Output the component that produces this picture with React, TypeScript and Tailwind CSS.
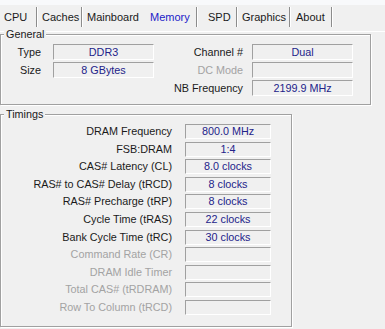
const tabs = [
  { label: 'CPU', w: 'w-[37px]', pl: 'pl-[4px]', sep: true },
  { label: 'Caches', w: 'w-[45px]', pl: 'pl-[5px]', sep: true },
  { label: 'Mainboard', w: 'w-[61px]', pl: 'pl-[5px]', sep: false },
  { label: 'Memory', w: 'w-[54px]', pl: 'pl-[7px]', sep: true, active: true },
  { label: 'SPD', w: 'w-[40px]', pl: 'pl-[11px]', sep: true },
  { label: 'Graphics', w: 'w-[53px]', pl: 'pl-[5px]', sep: true },
  { label: 'About', w: 'w-[42px]', pl: 'pl-[6px]', sep: true },
]

const timings = [
  { label: 'DRAM Frequency', value: '800.0 MHz' },
  { label: 'FSB:DRAM', value: '1:4' },
  { label: 'CAS# Latency (CL)', value: '8.0 clocks' },
  { label: 'RAS# to CAS# Delay (tRCD)', value: '8 clocks' },
  { label: 'RAS# Precharge (tRP)', value: '8 clocks' },
  { label: 'Cycle Time (tRAS)', value: '22 clocks' },
  { label: 'Bank Cycle Time (tRC)', value: '30 clocks' },
  { label: 'Command Rate (CR)', value: '' },
  { label: 'DRAM Idle Timer', value: '' },
  { label: 'Total CAS# (tRDRAM)', value: '' },
  { label: 'Row To Column (tRCD)', value: '' },
]

function Field({ value, w, h }: { value: string; w: string; h: string }) {
  return (
    <div
      className={`${w} ${h} flex items-center justify-center border border-t-[#a0a0a0] border-l-[#a0a0a0] border-r-white border-b-white text-[#23238a]`}
    >
      {value}
    </div>
  )
}

function Group({ title, className, children }: { title: string; className: string; children: React.ReactNode }) {
  return (
    <div className={`relative border border-[#a0a0a0] shadow-[inset_1px_1px_0_#fff,1px_1px_0_#fff] ${className}`}>
      <span className="absolute left-[3px] top-[-7px] px-[2px] bg-[#f0f0f0] leading-[12px] text-[#1a1a1a]">{title}</span>
      {children}
    </div>
  )
}

export default function App() {
  return (
    <div className="w-[385px] h-[329px] overflow-hidden bg-[#f0f0f0] text-[10.8px] leading-none font-['Liberation_Sans',Arial,sans-serif] text-[#1a1a1a]">
      {/* ── tab strip ── */}
      <div className="h-[5px] bg-[#f8f9fb]" />
      <div className="flex h-[26px] text-[11px]">
        {tabs.map(t => (
          <div
            key={t.label}
            className={`${t.w} ${t.pl} mt-[2px] h-[20px] flex items-center ${t.sep ? 'border-r border-[#8c8c8c] shadow-[1px_0_0_#fff]' : ''} ${t.active ? 'text-[#1c1cc8]' : ''}`}
          >
            {t.label}
          </div>
        ))}
      </div>
      <div className="h-[1px] bg-white" />

      {/* ── General ── */}
      <Group title="General" className="mt-[2px] w-[371px] h-[71px]">
        <div className="flex pt-[9px]">
          <div className="flex flex-col gap-[2px]">
            {[['Type', 'DDR3'], ['Size', '8 GBytes']].map(([l, v]) => (
              <div key={l} className="flex items-center">
                <span className="w-[40px] text-right">{l}</span>
                <div className="ml-[12px]">
                  <Field value={v} w="w-[101px]" h="h-[16px]" />
                </div>
              </div>
            ))}
          </div>
          <div className="flex flex-col gap-[2px]">
            {[
              ['Channel #', 'Dual', false],
              ['DC Mode', '', true],
              ['NB Frequency', '2199.9 MHz', false],
            ].map(([l, v, off]) => (
              <div key={l as string} className="flex items-center">
                <span className={`w-[89px] text-right ${off ? 'text-[#a3a3a3]' : ''}`}>{l}</span>
                <div className="ml-[9px]">
                  <Field value={v as string} w="w-[101px]" h="h-[16px]" />
                </div>
              </div>
            ))}
          </div>
        </div>
      </Group>

      {/* ── Timings ── */}
      <Group title="Timings" className="mt-[9px] w-[292px] h-[213px]">
        <div className="flex flex-col gap-[2.6px] pt-[9px]">
          {timings.map(t => (
            <div key={t.label} className="flex items-center">
              <span className={`w-[171px] text-right ${t.value ? '' : 'text-[#a3a3a3]'}`}>{t.label}</span>
              <div className="ml-[13px]">
                <Field value={t.value} w="w-[86px]" h="h-[15px]" />
              </div>
            </div>
          ))}
        </div>
      </Group>
    </div>
  )
}
